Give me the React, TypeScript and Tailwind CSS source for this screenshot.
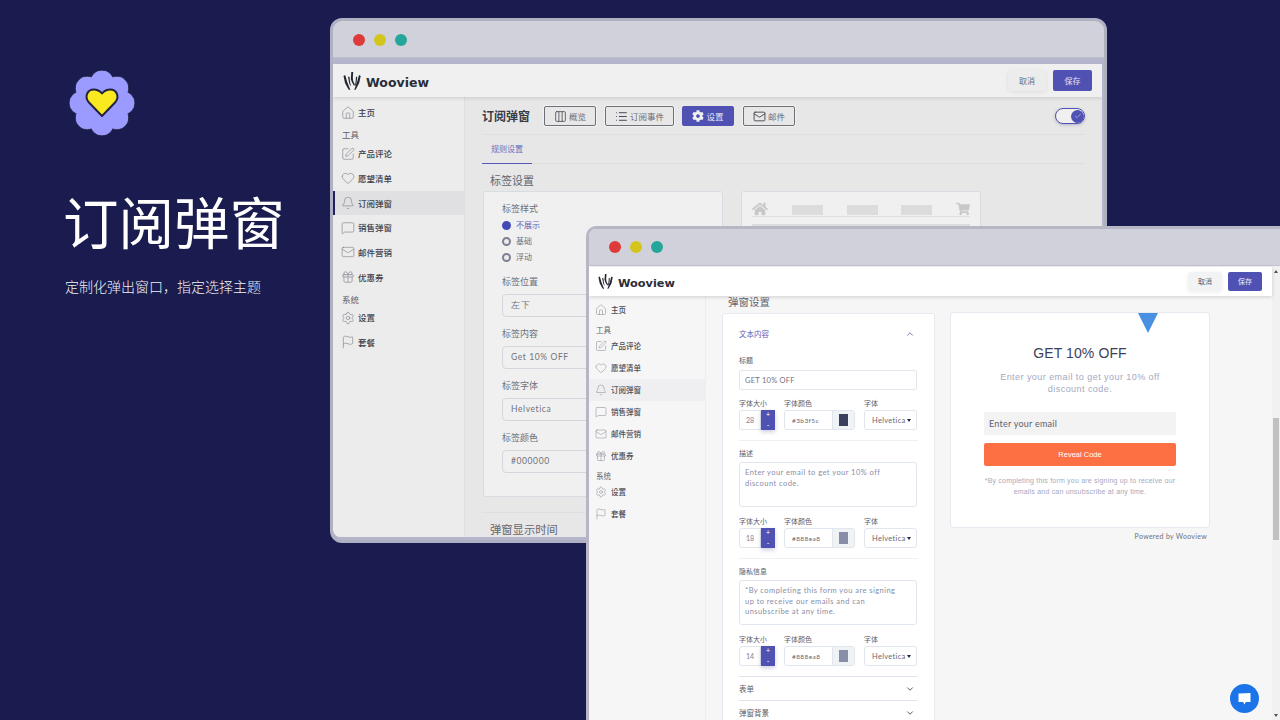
import React from "react";
import { Home, SquarePen, Heart, Bell, MessageSquare, Mail, Gift, Settings, Flag, Columns3, List, ChevronUp, ChevronDown, Check } from "lucide-react";
import { FaCog, FaHome, FaShoppingCart } from "react-icons/fa";

const cjk = "font-['Noto_Sans_CJK_SC',sans-serif]";

function Logo({ size }: { size: number }) {
  return (
    <svg width={size} height={size} viewBox="0 0 18 18" fill="#23262f">
      <path d="M0.5 4 L2.2 3 L4.2 10 L7.4 18 L5.5 17.5 L2 11 Z" />
      <path d="M5 5 L6.4 4.5 L7.2 11 L8.2 14.5 L6.4 12 Z" />
      <path d="M8.3 0 L10.2 0 L9.8 6 L10.2 9 L12 13 L11 13.8 L8.8 10 L7.8 7 Z" />
      <path d="M13 4.5 L14.2 5 L13.5 12 L11.8 14.5 L12.6 10 Z" />
      <path d="M16 3 L17.7 4 L16.2 11 L12.8 17.5 L11.2 18 L14.1 10 Z" />
    </svg>
  );
}

function Dots({ cls }: { cls: string }) {
  return (
    <div className={`flex items-center gap-[9px] ${cls}`}>
      <span className="w-[12px] h-[12px] rounded-full bg-[#df3a3a]" />
      <span className="w-[12px] h-[12px] rounded-full bg-[#d4c51e]" />
      <span className="w-[12px] h-[12px] rounded-full bg-[#26a69a]" />
    </div>
  );
}

type SideProps = {
  rowH: string;
  labelH: string;
  text: string;
  label: string;
  icon: number;
  activeBg: string;
  gapCls: string;
  pad: string;
  iconColor: string;
};

function Row({ I, t, active, p }: { I: any; t: string; active?: boolean; p: SideProps }) {
  return (
    <div className={`flex items-center ${p.gapCls} ${p.rowH} ${active ? `${p.activeBg} border-l-2 border-[#1f2160] pl-[6px]` : "pl-[8px]"}`}>
      <I size={p.icon} strokeWidth={1} color={p.iconColor} className="shrink-0" />
      <span className={`${p.text} font-medium`}>{t}</span>
    </div>
  );
}

function Sidebar(p: SideProps) {
  return (
    <div className={`flex flex-col shrink-0 ${p.pad}`}>
      <Row I={Home} t="主页" p={p} />
      <div className={`flex items-end pl-[9px] ${p.labelH}`}><span className={p.label}>工具</span></div>
      <Row I={SquarePen} t="产品评论" p={p} />
      <Row I={Heart} t="愿望清单" p={p} />
      <Row I={Bell} t="订阅弹窗" active p={p} />
      <Row I={MessageSquare} t="销售弹窗" p={p} />
      <Row I={Mail} t="邮件营销" p={p} />
      <Row I={Gift} t="优惠券" p={p} />
      <div className={`flex items-end pl-[9px] ${p.labelH}`}><span className={p.label}>系统</span></div>
      <Row I={Settings} t="设置" p={p} />
      <Row I={Flag} t="套餐" p={p} />
    </div>
  );
}

function TopBtn({ w, I, t, active }: { w: string; I: any; t: string; active?: boolean }) {
  return (
    <div className={`${w} h-[20px] rounded-[2px] flex items-center justify-center gap-[2px] text-[8.5px] ${active ? "bg-[#4f52b2] text-[#e6e6f2]" : "border border-[#6f7076] text-[#6d6e78] shadow-[0_0_0_1px_#f2f2f2]"}`}>
      {I}
      <span>{t}</span>
    </div>
  );
}

function Field1({ label, value }: { label: string; value: string }) {
  return (
    <div className="mb-[11.5px]">
      <div className="text-[9px] leading-[12px] text-[#6e7079]">{label}</div>
      <div className="mt-[5.5px] h-[23px] w-[198px] border border-[#d3d6dc] rounded-[4px] flex items-center pl-[8px] text-[8.5px] tracking-[0.6px] text-[#70727c] font-['Lato',sans-serif]">{value}</div>
    </div>
  );
}

function Radio({ t, on }: { t: string; on?: boolean }) {
  return (
    <div className="flex items-center gap-[5px] h-[16px]">
      {on ? (
        <span className="w-[9px] h-[9px] rounded-full bg-[#4449b8]" />
      ) : (
        <span className="w-[9px] h-[9px] rounded-full border-2 border-[#7d8097] bg-[#ececec]" />
      )}
      <span className={`text-[8px] ${on ? "text-[#5f62b8]" : "text-[#6e7079]"}`}>{t}</span>
    </div>
  );
}

function Window1() {
  return (
    <div className="absolute left-[330px] top-[18px] w-[777px] h-[525px] rounded-[12px] border-[3px] border-[#b0b0c3] bg-[#b5b5cb] overflow-hidden flex flex-col pr-[2px] pb-[3px]">
      <div className="h-[37px] -mr-[2px] pt-[1px] bg-[#d1d1db] shrink-0 flex items-center border-b border-[#bfbfcc]">
        <Dots cls="ml-[20px]" />
      </div>
      <div className="h-[6px] shrink-0" />
      <div className="flex-1 flex flex-col min-h-0 bg-[#e7e7e7] rounded-bl-[8px] overflow-hidden">
        <div className="h-[33px] shrink-0 bg-[#f0f0f0] shadow-[0_1px_4px_rgba(0,0,0,0.14)] z-10 flex items-center pl-[10px] pr-[10px]">
          <Logo size={18} />
          <span className="ml-[5px] mt-[6px] text-[12.5px] font-bold text-[#2a2e38] font-['DejaVu_Sans',sans-serif] leading-none">Wooview</span>
          <div className="ml-auto flex items-center gap-[7px]">
            <div className="w-[38px] h-[21px] rounded-[4px] bg-[#ececec] shadow-[0_1px_4px_rgba(0,0,0,0.08)] flex items-center justify-center text-[8px] text-[#6d6e78]">取消</div>
            <div className="w-[39px] h-[21px] rounded-[2px] bg-[#4f52b2] flex items-center justify-center text-[8px] text-[#e3e3f2]">保存</div>
          </div>
        </div>
        <div className="flex-1 flex min-h-0">
          <div className="w-[132px] shrink-0 bg-[#ececec] border-r border-[#dcdfe3]">
            <Sidebar rowH="h-[24.7px]" labelH="h-[16px]" text="text-[8.5px] text-[#3d3f4a]" label="text-[8.5px] text-[#5f616a]" icon={14} activeBg="bg-[#e0e0e2]" gapCls="gap-[3px]" pad="pt-[3.5px]" iconColor="#777983" />
          </div>
          <div className="flex-1 min-w-0 px-[17px] overflow-hidden">
            <div className="h-[38px] flex items-start pt-[9px] border-b border-[#dedfe1]">
              <span className="text-[12px] leading-[20px] font-bold text-[#3a3c48] w-[62px]">订阅弹窗</span>
              <TopBtn w="w-[52px]" I={<Columns3 size={13} strokeWidth={1.5} color="#4b4d58" />} t="概览" />
              <div className="w-[9px]" />
              <TopBtn w="w-[69px]" I={<List size={13} strokeWidth={1.7} color="#3a3c48" />} t="订阅事件" />
              <div className="w-[8px]" />
              <TopBtn w="w-[52px]" I={<FaCog size={12} color="#f0f0f0" />} t="设置" active />
              <div className="w-[9px]" />
              <TopBtn w="w-[52px]" I={<Mail size={13} strokeWidth={1.6} color="#3a3c48" />} t="邮件" />
              <div className="ml-auto mt-[2px] w-[30px] h-[16px] rounded-full border-[1.5px] border-[#4f52b2] bg-[#f0f0f0] shadow-[0_1px_3px_rgba(60,60,120,0.3)] flex items-center justify-end">
                <span className="w-[13px] h-[13px] rounded-full bg-[#4f52b2] flex items-center justify-center"><Check size={8} color="#e5e5f5" strokeWidth={1.5} /></span>
              </div>
            </div>
            <div className="h-[29px] border-b border-[#dedfe1] flex">
              <div className="w-[50px] h-[29px] border-b-[1.5px] border-[#5659b8] flex items-center justify-center text-[8px] text-[#6a6dbc]">规则设置</div>
            </div>
            <div className="ml-[8px] mt-[9px] text-[11px] leading-[14px] text-[#64666f]">标签设置</div>
            <div className="flex gap-[18px] mt-[4px] ml-px">
              <div className="w-[240px] h-[306px] shrink-0 bg-[#f0f0f0] border border-[#d8dce2] rounded-[3px] pl-[18px] pt-[11px]">
                <div className="text-[9px] leading-[12px] text-[#6e7079]">标签样式</div>
                <div className="mt-[2px] mb-[11px]">
                  <Radio t="不展示" on />
                  <Radio t="基础" />
                  <Radio t="浮动" />
                </div>
                <Field1 label="标签位置" value="左下" />
                <Field1 label="标签内容" value="Get 10% OFF" />
                <Field1 label="标签字体" value="Helvetica" />
                <Field1 label="标签颜色" value="#000000" />
              </div>
              <div className="w-[240px] h-[200px] shrink-0 bg-[#f0f0f0] border border-[#d8dce2] rounded-[3px] px-[10px] pt-[10px]">
                <div className="h-[15px] flex items-start justify-between border-b border-[#dfe0e2]">
                  <FaHome size={16} color="#c8c8c8" className="-mt-[1px]" />
                  <span className="w-[31px] h-[10px] mt-[3px] bg-[#dcdcdc]" />
                  <span className="w-[31px] h-[10px] mt-[3px] bg-[#dcdcdc]" />
                  <span className="w-[31px] h-[10px] mt-[3px] bg-[#dcdcdc]" />
                  <FaShoppingCart size={14} color="#c8c8c8" />
                </div>
                <div className="mt-[7px] h-[3px] bg-[#dcdcdc]" />
              </div>
            </div>
            <div className="mt-[15px] border-t border-[#dedfe1]" />
            <div className="ml-[8px] mt-[8px] text-[11.3px] leading-[16px] text-[#64666f]">弹窗显示时间</div>
          </div>
        </div>
      </div>
    </div>
  );
}

function Box({ w, children, cls }: { w: string; children?: React.ReactNode; cls?: string }) {
  return <div className={`${w} h-[20px] bg-white border border-[#e0e6ed] rounded-[3px] flex items-center ${cls ?? ""}`}>{children}</div>;
}

function FontRow({ size, color, swatch }: { size: string; color: string; swatch: string }) {
  return (
    <div>
      <div className="flex h-[12px] pb-[2px] items-center text-[7px] text-[#5a5c68]">
        <span className="w-[45px]">字体大小</span>
        <span className="w-[80px]">字体颜色</span>
        <span>字体</span>
      </div>
      <div className="flex">
        <div className="w-[36px] h-[20px] flex shrink-0">
          <div className="w-[22px] h-[20px] pt-[1px] bg-white border border-[#e0e6ed] rounded-l-[3px] flex items-center justify-center text-[7px] text-[#7a7f96] font-['Lato',sans-serif]">{size}</div>
          <div className="w-[14px] h-[20px] bg-[#4f52b2] shadow-[0_2px_4px_rgba(60,60,140,0.25)] flex flex-col items-center justify-between text-[7px] leading-[9px] text-white font-['Lato',sans-serif]">
            <span>+</span>
            <span>-</span>
          </div>
        </div>
        <div className="w-[71px] ml-[9px] h-[20px] bg-white border border-[#e0e6ed] rounded-[3px] flex items-center shrink-0 overflow-hidden">
          <span className="flex-1 pl-[7px] pt-[1px] text-[6.5px] tracking-[0.4px] text-[#666875] font-['Lato',sans-serif]">{color}</span>
          <span className="w-[22px] h-full bg-[#f1f2f3] border-l border-[#e0e6ed] flex items-center justify-center">
            <span className={`w-[9px] h-[12px] ${swatch}`} />
          </span>
        </div>
        <div className="w-[53px] ml-[9px] h-[20px] pt-[1px] bg-white border border-[#e0e6ed] rounded-[3px] flex items-center pl-[7px] text-[7.5px] tracking-[0.3px] text-[#666875] font-['Lato',sans-serif] shrink-0">
          Helvetica
          <span className="ml-[1px] w-0 h-0 border-x-[2.5px] border-x-transparent border-t-[3px] border-t-[#23262f]" />
        </div>
      </div>
    </div>
  );
}

function TArea({ lines, h }: { lines: string[]; h: string }) {
  return (
    <div className={`${h} w-[178px] bg-white border border-[#e0e6ed] rounded-[3px] pl-[5px] pt-[5px] text-[7.5px] leading-[10.7px] tracking-[0.45px] text-[#888ea8] font-['Lato',sans-serif]`}>
      {lines.map((l) => <div key={l}>{l}</div>)}
    </div>
  );
}

function Window2() {
  return (
    <div className="absolute left-[586px] top-[226px] w-[694px] h-[494px] rounded-tl-[10px] border-t-[3px] border-l-[3px] border-[#b6b6c4] bg-[#f6f6f7] overflow-hidden flex flex-col">
      <div className="h-[37px] bg-[#d1d1db] shrink-0 flex items-center border-b border-[#c4c4d0]">
        <Dots cls="ml-[20px]" />
      </div>
      <div className="flex-1 flex min-h-0">
        <div className="flex-1 min-w-0 flex flex-col">
          <div className="mt-[1px] h-[29px] shrink-0 bg-white shadow-[0_1px_4px_rgba(0,0,0,0.16)] z-10 flex items-center pl-[9px] pr-[10px]">
            <Logo size={15} />
            <span className="ml-[5px] mt-[5px] text-[11.3px] font-bold text-[#2a2e38] font-['DejaVu_Sans',sans-serif] leading-none">Wooview</span>
            <div className="ml-auto flex items-center gap-[6px]">
              <div className="w-[34px] h-[19px] rounded-[4px] bg-[#f2f3f4] shadow-[0_1px_4px_rgba(0,0,0,0.08)] flex items-center justify-center text-[7px] text-[#5a5c68]">取消</div>
              <div className="w-[34px] h-[19px] rounded-[2px] bg-[#4f52b2] flex items-center justify-center text-[7px] text-[#ececf8]">保存</div>
            </div>
          </div>
          <div className="flex-1 flex min-h-0">
            <div className="w-[117px] shrink-0 bg-[#f6f6f7] border-r border-[#eceef0]">
              <Sidebar rowH="h-[22px]" labelH="h-[14px]" text="text-[7.5px] text-[#4a4c58]" label="text-[7.5px] text-[#5f616a]" icon={12} activeBg="bg-[#efeff1]" gapCls="gap-[4px]" pad="pt-[3px] -ml-[2px]" iconColor="#82848e" />
            </div>
            <div className="flex-1 min-w-0 pl-[16px]">
              <div className="ml-[6px] h-[17px] text-[10.5px] leading-[12px] text-[#64666f]">弹窗设置</div>
              <div className="flex gap-[15px] items-start">
                <div className="w-[213px] h-[420px] shrink-0 bg-white border border-[#e6eaf0] rounded-[3px] px-[16px]">
                  <div className="h-[41px] pb-[2px] flex items-center justify-between pr-[3px] text-[7.5px] text-[#5f62b8]">
                    <span>文本内容</span>
                    <ChevronUp size={10} strokeWidth={2} color="#5f62b8" />
                  </div>
                  <div className="h-[15px] pb-[4px] flex items-center text-[7px] text-[#5a5c68]">标题</div>
                  <Box w="w-[178px]" cls="pl-[5px] pt-[1px] text-[7.5px] tracking-[0.25px] text-[#70727f] font-['Lato',sans-serif]">GET 10% OFF</Box>
                  <div className="mt-[8px]"><FontRow size="28" color="#3b3f5c" swatch="bg-[#3b3f5c]" /></div>
                  <div className="mt-[10px] border-t border-[#eef0f3]" />
                  <div className="h-[21px] pt-[3px] flex items-center text-[7px] text-[#5a5c68]">描述</div>
                  <TArea h="h-[45px]" lines={["Enter your email to get your 10% off", "discount code."]} />
                  <div className="mt-[9px]"><FontRow size="18" color="#888ea8" swatch="bg-[#888ea8]" /></div>
                  <div className="mt-[10px] border-t border-[#eef0f3]" />
                  <div className="h-[21px] pt-[3px] flex items-center text-[7px] text-[#5a5c68]">隐私信息</div>
                  <TArea h="h-[45px]" lines={["*By completing this form you are signing", "up to receive our emails and can", "unsubscribe at any time."]} />
                  <div className="mt-[9px]"><FontRow size="14" color="#888ea8" swatch="bg-[#888ea8]" /></div>
                  <div className="mt-[10px] border-t border-[#e0e6ed]" />
                  <div className="h-[23px] flex items-center justify-between pr-[3px] text-[7.5px] text-[#5a5c68]">
                    <span>表单</span><ChevronDown size={10} strokeWidth={2} color="#3b3f5c" />
                  </div>
                  <div className="border-t border-[#e0e6ed]" />
                  <div className="h-[23px] flex items-center justify-between pr-[3px] text-[7.5px] text-[#5a5c68]">
                    <span>弹窗背景</span><ChevronDown size={10} strokeWidth={2} color="#3b3f5c" />
                  </div>
                </div>
                <div className="w-[260px] shrink-0 -mt-[1px]">
                  <div className="relative h-[216px] bg-white border border-[#e6eaf0] rounded-[3px] flex flex-col items-center font-['Liberation_Sans',sans-serif]">
                    <span className="absolute top-0 left-[187px] w-0 h-0 border-x-[10px] border-x-transparent border-t-[20px] border-t-[#4a90e2]" />
                    <div className="mt-[31px] text-[14px] leading-[18px] text-[#3b3f5c] tracking-[0.1px]">GET 10% OFF</div>
                    <div className="mt-[9px] text-[9px] leading-[12px] tracking-[0.45px] text-[#a5a9bf] text-center">Enter your email to get your 10% off<br />discount code.</div>
                    <div className="mt-[17px] w-[192px] h-[23px] bg-[#f3f3f3] flex items-center pl-[5px] text-[9px] tracking-[0.25px] text-[#5f616c] font-['Lato',sans-serif]">Enter your email</div>
                    <div className="mt-[8px] w-[192px] h-[23px] bg-[#fc7043] rounded-[2px] flex items-center justify-center text-[7.5px] text-white">Reveal Code</div>
                    <div className="mt-[8.5px] text-[7px] leading-[11px] tracking-[0.2px] text-[#a5a9bf] text-center">*By completing this form you are signing up to receive our<br />emails and can unsubscribe at any time.</div>
                  </div>
                  <div className="mt-[3px] pr-[3px] text-right text-[7px] leading-[10px] tracking-[0.3px] text-[#6e7079] font-['Lato',sans-serif]">Powered by Wooview</div>
                </div>
              </div>
            </div>
          </div>
        </div>
        <div className="w-[8px] shrink-0 bg-[#f1f1f1] flex flex-col items-center relative">
          <span className="mt-[4px] w-0 h-0 border-x-[2.5px] border-x-transparent border-b-[3px] border-b-[#505050]" />
          <span className="mt-[145px] w-[6px] h-[122px] bg-[#c1c1c1]" />
          <span className="mt-auto mb-[3px] w-0 h-0 border-x-[2.5px] border-x-transparent border-t-[3px] border-t-[#505050]" />
        </div>
      </div>
    </div>
  );
}

function Flower() {
  const pts = Array.from({ length: 8 }, (_, i) => {
    const a = (i * Math.PI) / 4 - Math.PI / 2;
    return [33 + 21 * Math.cos(a), 33 + 21 * Math.sin(a)];
  });
  return (
    <svg width="66" height="66" viewBox="0 0 66 66" className="shrink-0">
      {pts.map(([x, y], i) => <circle key={i} cx={x} cy={y} r="11.8" fill="#9a9aff" stroke="#23233f" strokeWidth="1" />)}
      {pts.map(([x, y], i) => <circle key={`f${i}`} cx={x} cy={y} r="11.3" fill="#9a9aff" />)}
      <circle cx="33" cy="33" r="22" fill="#9a9aff" />
      <path d="M33 46 L19.5 32 C15 26 19 19.5 24.5 19.5 C28 19.5 31 21 33 23.5 C35 21 38 19.5 41.5 19.5 C47 19.5 51 26 46.5 32 Z" fill="#fbe91f" stroke="#23233f" strokeWidth="2" strokeLinejoin="round" />
    </svg>
  );
}

export default function App() {
  return (
    <div className={`relative w-[1280px] h-[720px] overflow-hidden bg-[#1a1b4e] ${cjk}`}>
      <div className="pt-[70px] pl-[69px]">
        <Flower />
      </div>
      <div className="pl-[63px] mt-[49px] text-[55.5px] leading-[70px] text-white">订阅弹窗</div>
      <div className="pl-[65px] mt-[21px] text-[14px] leading-[20px] text-[#f0f0f5] font-light">{"定制化弹出窗口\uFF0C指定选择主题"}</div>
      <Window1 />
      <Window2 />
      <div className="absolute left-[1230px] top-[684px] w-[29px] h-[29px] rounded-full bg-[#1b74e8] flex items-center justify-center">
        <svg width="15" height="14" viewBox="0 0 15 14"><path d="M1.5 1.5 L13.5 1 L13.5 10 L8.8 10 L7.5 12.5 L6.2 10 L1.5 10 Z" fill="#fff" /></svg>
      </div>
    </div>
  );
}
